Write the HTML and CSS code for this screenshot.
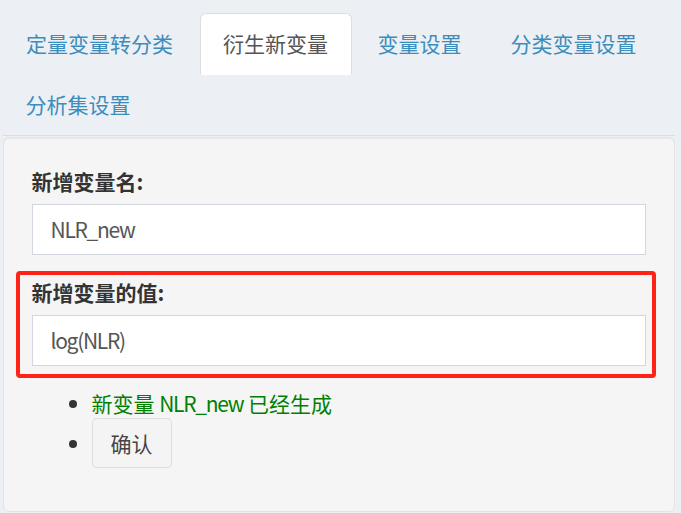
FILE: index.html
```html
<!DOCTYPE html>
<html lang="zh">
<head>
<meta charset="utf-8">
<link rel="stylesheet" href="styles.css">
</head>
<body>
<div class="wrap">
  <ul class="tabs">
    <li><a href="#">定量变量转分类</a></li>
    <li class="active"><a href="#">衍生新变量</a></li>
    <li><a href="#">变量设置</a></li>
    <li><a href="#">分类变量设置</a></li>
    <li><a href="#">分析集设置</a></li>
  </ul>
  <div class="panel">
    <div class="form-group">
      <label class="label">新增变量名:</label>
      <input class="form-control" type="text" value="NLR_new">
    </div>
    <div class="form-group highlighted">
      <label class="label">新增变量的值:</label>
      <input class="form-control" type="text" value="log(NLR)">
    </div>
    <ul class="list">
      <li><span class="ok">新变量 <span class="latin">NLR_new</span> 已经生成</span></li>
      <li><button class="btn" type="button">确认</button></li>
    </ul>
  </div>
</div>
</body>
</html>
```
FILE: styles.css
```css
html, body {
  margin: 0;
  padding: 0;
  background: #ecf0f5;
  font-family: "Noto Sans CJK SC", "Noto Sans", sans-serif;
  font-size: 21px;
  color: #333;
}

.wrap {
  padding: 13px 6px 0 2.5px;
}

.tabs {
  list-style: none;
  margin: 0;
  padding: 0;
  display: flex;
  flex-wrap: wrap;
  border-bottom: 1px solid #ddd;
}

.tabs li {
  margin: 0 3px -1px 0;
}

.tabs a {
  display: block;
  padding: 14px 22.5px 16px;
  line-height: 30px;
  font-size: 21px;
  color: #3c8dbc;
  text-decoration: none;
  border: 1px solid transparent;
  border-radius: 6px 6px 0 0;
}

.tabs li:nth-child(n+3) a {
  padding-left: 22px;
  padding-right: 22px;
}

.tabs .active a {
  background: #fff;
  color: #555;
  border-color: #ddd;
  border-bottom-color: transparent;
}

.panel {
  background: #f5f5f5;
  border: 1px solid #e3e3e3;
  border-radius: 6px;
  box-shadow: inset 0 1px 1px rgba(0, 0, 0, 0.05);
  padding: 28px;
  margin-top: 1px;
}

.form-group {
  margin-bottom: 22.5px;
}

.highlighted {
  position: relative;
}

.highlighted::after {
  content: "";
  position: absolute;
  top: -6px;
  left: -16px;
  right: -10px;
  bottom: -12px;
  border: 4px solid #ff2216;
  border-radius: 4px;
  pointer-events: none;
}

.label {
  display: block;
  font-weight: 700;
  line-height: 30px;
  margin-bottom: 7.5px;
  color: #333;
}

.form-control {
  display: block;
  box-sizing: border-box;
  width: 100%;
  height: 51px;
  padding: 9px 18px;
  border: 1px solid #d2d6de;
  border-radius: 0;
  background: #fff;
  font-family: inherit;
  font-size: 21px;
  letter-spacing: -1.3px;
  color: #555;
  outline: none;
  margin: 0;
}

.list {
  margin: 0 0 15px;
  padding-left: 60px;
  line-height: 30px;
}

.ok {
  color: #008000;
}

.latin {
  letter-spacing: -1.3px;
}

.btn {
  font-family: inherit;
  font-size: 21px;
  line-height: 30px;
  padding: 9px 18px;
  background: #f4f4f4;
  border: 1px solid #ddd;
  border-radius: 4.5px;
  color: #444;
  margin: 0;
}
```
